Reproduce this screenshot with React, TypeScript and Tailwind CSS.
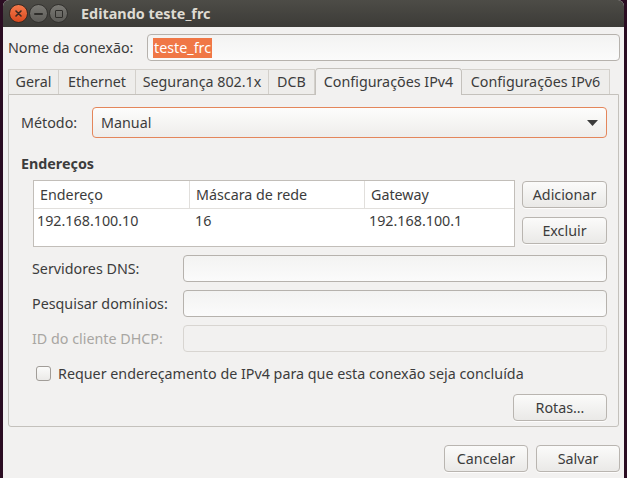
import React from "react";

const font = { fontFamily: '"Noto Sans", "DejaVu Sans", sans-serif' };

function Btn({ children, className = "" }: { children: React.ReactNode; className?: string }) {
  return (
    <div
      className={
        "flex items-center justify-center rounded-[4px] border border-[#b9b5b0] bg-gradient-to-b from-[#fbfbfa] to-[#eae9e7] text-[#3c3c3c] shadow-[0_1px_0_rgba(255,255,255,0.8)] " +
        className
      }
    >
      {children}
    </div>
  );
}

function Field({ disabled = false }: { disabled?: boolean }) {
  return (
    <div
      className={
        "h-[27px] flex-1 rounded-[4px] border " +
        (disabled
          ? "border-[#d8d5d1] bg-[#f2f1f0]"
          : "border-[#b6b2ad] bg-gradient-to-b from-[#f3f3f2] to-[#fbfbfb]")
      }
    />
  );
}

export default function App() {
  return (
    <div className="w-[627px] h-[478px] bg-[#2b0d22] pl-[3px] text-[14.3px] text-[#3c3c3c] overflow-hidden" style={font}>
      <div className="w-[621px] h-[478px] bg-[#f2f1f0] rounded-t-[6px] flex flex-col overflow-hidden">
        {/* Title bar */}
        <div className="h-[27px] bg-gradient-to-b from-[#4d4c47] to-[#3c3b37] flex items-center pl-[6px]">
          <div className="w-[19px] h-[19px] rounded-full bg-gradient-to-b from-[#f57a4b] to-[#d9481d] flex items-center justify-center border border-[#3a2a22]">
            <svg width="9" height="9" viewBox="0 0 9 9">
              <path d="M2 2 L7 7 M7 2 L2 7" stroke="#3b2a22" strokeWidth="1.6" strokeLinecap="round" />
            </svg>
          </div>
          <div className="ml-[1px] w-[19px] h-[19px] rounded-full bg-gradient-to-b from-[#7a7974] to-[#5d5c58] flex items-center justify-center border border-[#33322f]">
            <div className="w-[9px] h-[2px] bg-[#2e2d2a] rounded-sm" />
          </div>
          <div className="ml-[1px] w-[19px] h-[19px] rounded-full bg-gradient-to-b from-[#7a7974] to-[#5d5c58] flex items-center justify-center border border-[#33322f]">
            <div className="w-[8px] h-[8px] border-[1.5px] border-[#2e2d2a] rounded-[1px]" />
          </div>
          <div className="ml-[13px] text-[14.4px] font-bold text-[#dfdbd2]">Editando teste_frc</div>
        </div>

        {/* Name row */}
        <div className="flex items-center mt-[7px] pl-[5px] pr-[4px] h-[27px]">
          <div className="w-[139px]">Nome da conexão:</div>
          <div className="flex-1 h-[27px] rounded-[4px] border border-[#b6b2ad] bg-gradient-to-b from-[#f3f3f2] to-[#fbfbfb] flex items-center pl-[5px]">
            <span className="bg-[#f07746] text-white leading-[20px] px-[1px]">teste_frc</span>
          </div>
        </div>

        {/* Tabs */}
        <div className="mt-[6px] mx-[5px] flex h-[27px] items-end">
          {[
            ["Geral", "w-[51px]"],
            ["Ethernet", "w-[77px]"],
            ["Segurança 802.1x", "w-[133px]"],
            ["DCB", "w-[46px]"],
          ].map(([t, w], i) => (
            <div
              key={t}
              className={
                w +
                " h-[25px] flex items-center justify-center border-t border-[#d3d0cb] bg-[#eeedeb] " +
                (i === 0 ? "border-l " : "") +
                "border-r"
              }
            >
              {t}
            </div>
          ))}
          <div className="w-[147px] h-[27px] flex items-center justify-center border border-b-0 border-[#c4c1bc] rounded-t-[4px] bg-[#f2f1f0] relative top-[1px]">
            Configurações IPv4
          </div>
          <div className="w-[148px] h-[25px] flex items-center justify-center border-t border-r border-[#d3d0cb] bg-[#eeedeb]">
            Configurações IPv6
          </div>
        </div>

        {/* Panel */}
        <div className="mx-[5px] h-[333px] border border-[#c4c1bc] rounded-b-[3px] flex flex-col pl-[12px] pr-[11px]">
          <div className="flex items-center mt-[12px] h-[31px]">
            <div className="w-[71px]">Método:</div>
            <div className="flex-1 h-[31px] rounded-[4px] border border-[#e4865b] bg-gradient-to-b from-[#fdfdfc] to-[#eeedeb] flex items-center pl-[8px] pr-[8px]">
              <span className="flex-1">Manual</span>
              <svg width="11" height="6" viewBox="0 0 11 6">
                <path d="M0 0 L11 0 L5.5 6 Z" fill="#3c3c3c" />
              </svg>
            </div>
          </div>

          <div className="mt-[17px] font-bold leading-[18px]">Endereços</div>

          <div className="flex mt-[7px] pl-[12px]">
            <div className="w-[482px] h-[67px] border border-[#c2beb9] bg-white text-[#3c3c3c]">
              <div className="flex h-[28px] border-b border-[#e1dfdc]">
                <div className="w-[156px] border-r border-[#e1dfdc] flex items-center pl-[6px]">Endereço</div>
                <div className="w-[175px] border-r border-[#e1dfdc] flex items-center pl-[6px]">Máscara de rede</div>
                <div className="flex-1 flex items-center pl-[6px]">Gateway</div>
              </div>
              <div className="flex h-[24px] items-center">
                <div className="w-[157px] pl-[3px]">192.168.100.10</div>
                <div className="w-[175px] pl-[4px]">16</div>
                <div className="flex-1 pl-[3px]">192.168.100.1</div>
              </div>
            </div>
            <div className="ml-[7px] flex flex-col flex-1">
              <Btn className="h-[27px] mt-[1px]">Adicionar</Btn>
              <Btn className="h-[27px] mt-[9px]">Excluir</Btn>
            </div>
          </div>

          <div className="pl-[11px] flex flex-col">
            <div className="flex items-center mt-[8px]">
              <div className="w-[151px]">Servidores DNS:</div>
              <Field />
            </div>
            <div className="flex items-center mt-[8px]">
              <div className="w-[151px]">Pesquisar domínios:</div>
              <Field />
            </div>
            <div className="flex items-center mt-[8px]">
              <div className="w-[151px] text-[#a8a6a2]">ID do cliente DHCP:</div>
              <Field disabled />
            </div>
          </div>

          <div className="flex items-center mt-[11px] pl-[15px]">
            <div className="w-[15px] h-[15px] rounded-[3px] border border-[#a19d98] bg-gradient-to-b from-[#fbfbfa] to-[#ebeae8]" />
            <div className="ml-[7px]">Requer endereçamento de IPv4 para que esta conexão seja concluída</div>
          </div>

          <div className="flex justify-end mt-[10px]">
            <Btn className="w-[94px] h-[27px]">Rotas…</Btn>
          </div>
        </div>

        {/* Bottom buttons */}
        <div className="flex justify-end mt-[18px] pr-[4px] gap-[8px]">
          <Btn className="w-[84px] h-[27px]">Cancelar</Btn>
          <Btn className="w-[84px] h-[27px]">Salvar</Btn>
        </div>
      </div>
    </div>
  );
}
